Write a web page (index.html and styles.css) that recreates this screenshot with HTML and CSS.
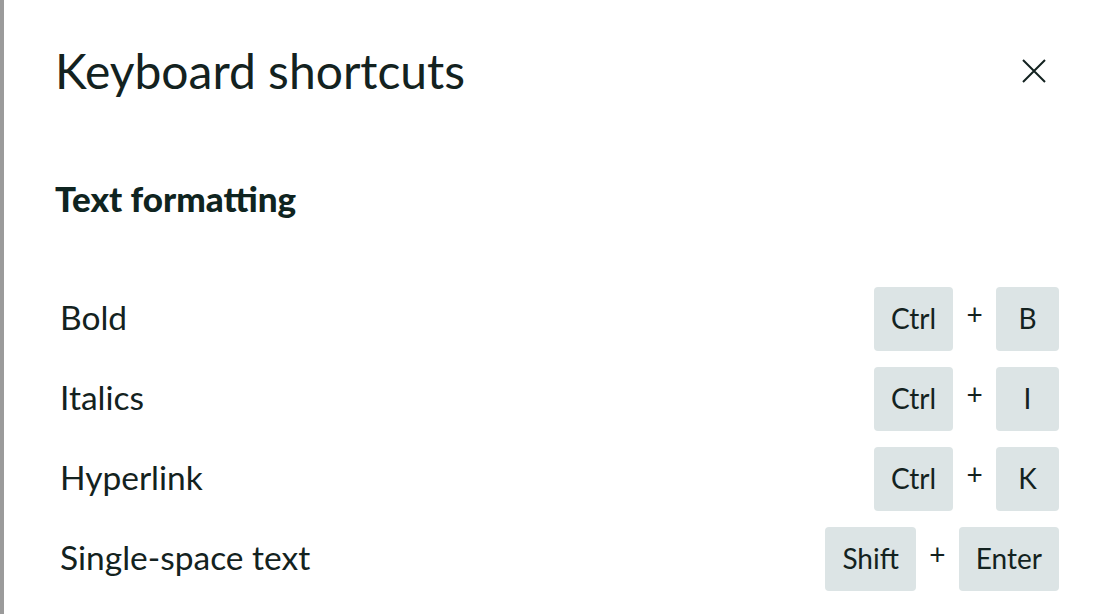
FILE: index.html
```html
<!DOCTYPE html>
<html lang="en">
<head>
    <meta charset="UTF-8">
    <meta name="viewport" content="width=device-width, initial-scale=1.0">
    <title>Keyboard shortcuts</title>
    <link rel="stylesheet" href="styles.css">
</head>
<body>
    <div class="dialog">
        <div class="dialog-header">
            <h1>Keyboard shortcuts</h1>
            <button type="button" class="close-btn" aria-label="Close">
                <svg width="24" height="24" viewBox="0 0 24 24">
                    <path d="M1 1 L23 23 M23 1 L1 23" stroke="#132220" stroke-width="2" fill="none"/>
                </svg>
            </button>
        </div>

        <h2>Text formatting</h2>

        <ul class="shortcut-list">
            <li class="shortcut">
                <span class="shortcut-name">Bold</span>
                <span class="keys"><kbd>Ctrl</kbd><span class="plus">+</span><kbd>B</kbd></span>
            </li>
            <li class="shortcut">
                <span class="shortcut-name">Italics</span>
                <span class="keys"><kbd>Ctrl</kbd><span class="plus">+</span><kbd>I</kbd></span>
            </li>
            <li class="shortcut">
                <span class="shortcut-name">Hyperlink</span>
                <span class="keys"><kbd>Ctrl</kbd><span class="plus">+</span><kbd>K</kbd></span>
            </li>
            <li class="shortcut">
                <span class="shortcut-name">Single-space text</span>
                <span class="keys"><kbd>Shift</kbd><span class="plus">+</span><kbd>Enter</kbd></span>
            </li>
        </ul>
    </div>
</body>
</html>
```

FILE: styles.css
```css
* {
    box-sizing: border-box;
    margin: 0;
    padding: 0;
}

body {
    font-family: Lato, "Noto Sans", sans-serif;
    color: #132220;
    background: #fff;
    height: 100vh;
    overflow: hidden;
}

.dialog {
    height: 100%;
    border-left: 4px solid #9b9b9b;
    padding: 42px 61px 0 51px;
}

.dialog-header {
    display: flex;
    justify-content: space-between;
    align-items: center;
}

h1 {
    font-size: 48px;
    font-weight: 400;
    line-height: 58px;
}

.close-btn {
    width: 40px;
    height: 40px;
    margin-right: 5px;
    border: none;
    background: none;
    display: flex;
    align-items: center;
    justify-content: center;
    cursor: pointer;
}

h2 {
    font-size: 35px;
    font-weight: 900;
    line-height: 40px;
    margin-top: 78px;
    color: #0f2420;
}

.shortcut-list {
    list-style: none;
    margin-top: 69px;
    display: flex;
    flex-direction: column;
    gap: 16px;
}

.shortcut {
    display: flex;
    justify-content: space-between;
    align-items: center;
    height: 64px;
    padding-left: 5px;
}

.shortcut-name {
    font-size: 33.5px;
    margin-top: -4px;
}

.keys {
    display: flex;
    align-items: center;
}

kbd {
    font-family: inherit;
    font-size: 28px;
    min-width: 63px;
    height: 64px;
    padding: 0 17px 2px;
    display: flex;
    align-items: center;
    justify-content: center;
    background: #dce4e5;
    border-radius: 4px;
}

.plus {
    width: 43px;
    text-align: center;
    font-size: 28px;
    margin-top: -10px;
}
```
